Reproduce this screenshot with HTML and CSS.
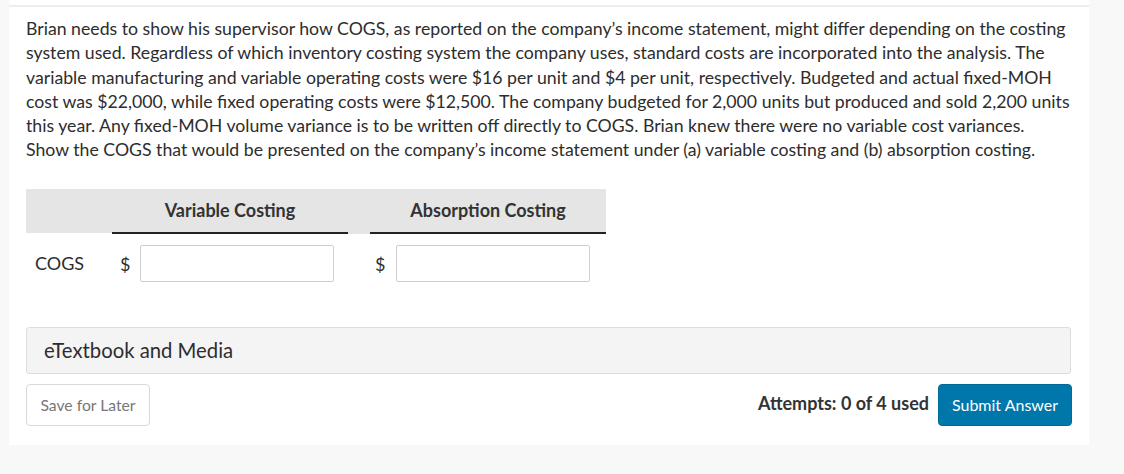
FILE: index.html
```html
<!DOCTYPE html>
<html>
<head>
<meta charset="utf-8">
<link rel="stylesheet" href="styles.css">
</head>
<body>
<div class="panel">
  <div class="question">
    <p class="prompt">Brian needs to show his supervisor how COGS, as reported on the company’s income statement, might differ depending on the costing system used. Regardless of which inventory costing system the company uses, standard costs are incorporated into the analysis. The variable manufacturing and variable operating costs were $16 per unit and $4 per unit, respectively. Budgeted and actual fixed-MOH cost was $22,000, while fixed operating costs were $12,500. The company budgeted for 2,000 units but produced and sold 2,200 units this year. Any fixed-MOH volume variance is to be written off directly to COGS. Brian knew there were no variable cost variances. Show the COGS that would be presented on the company’s income statement under (a) variable costing and (b) absorption costing.</p>

    <table class="grid">
      <thead>
        <tr>
          <th class="lab"></th>
          <th class="col">Variable Costing</th>
          <th class="sp"></th>
          <th class="col">Absorption Costing</th>
        </tr>
      </thead>
      <tbody>
        <tr>
          <td class="rowlab">COGS</td>
          <td class="cell"><span class="dollar">$</span><input class="box" type="text"></td>
          <td class="sp"></td>
          <td class="cell"><span class="dollar second">$</span><input class="box" type="text"></td>
        </tr>
      </tbody>
    </table>

    <div class="media">eTextbook and Media</div>

    <div class="actions">
      <button class="save">Save for Later</button>
      <div class="right">
        <span class="attempts">Attempts: 0 of 4 used</span>
        <button class="submit">Submit Answer</button>
      </div>
    </div>
  </div>
</div>
</body>
</html>
```

FILE: styles.css
```css
html, body {
  margin: 0;
  padding: 0;
  background: #f8f8f8;
}
body {
  font-family: Lato, "Open Sans", sans-serif;
  color: #2d2d2d;
  width: 1124px;
  height: 474px;
}
.panel {
  margin-left: 9px;
  width: 1080px;
  height: 445px;
  background: #ffffff;
  padding-top: 5px;
  box-sizing: border-box;
}
.question {
  border-top: 2px solid #eeeeee;
  padding: 10px 17px 0 17px;
}
.prompt {
  margin: 0;
  font-size: 17.7px;
  line-height: 24.3px;
  width: 1045px;
}
.grid {
  margin-top: 26px;
  border-collapse: collapse;
}
.grid th {
  background: #e5e5e5;
  height: 43px;
  padding: 0;
  font-size: 18px;
  font-weight: 700;
  color: #333;
}
.grid th.col {
  border-bottom: 2px solid #222;
}
.lab { width: 86px; }
.col { width: 236px; }
.sp { width: 22px; }
.grid th.sp { border-bottom: 2px solid #e5e5e5; background: #e5e5e5; }
.grid th.lab { border-bottom: 0; }
.grid td {
  padding: 0;
  height: 60px;
  vertical-align: middle;
}
.grid td.rowlab {
  padding-left: 9px;
  font-size: 18px;
}
.cell {
  white-space: nowrap;
}
.dollar {
  display: inline-block;
  width: 28px;
  font-size: 18px;
  padding-left: 8px;
  box-sizing: border-box;
  vertical-align: middle;
}
.dollar.second {
  width: 26px;
  padding-left: 5px;
}
.box {
  width: 194px;
  height: 37px;
  box-sizing: border-box;
  border: 1px solid #cfcfcf;
  border-radius: 2px;
  vertical-align: middle;
  margin: 0;
}
.media {
  margin-top: 33px;
  height: 47px;
  box-sizing: border-box;
  background: #f4f4f4;
  border: 1px solid #dddddd;
  border-radius: 3px;
  padding-left: 17px;
  font-size: 20.3px;
  line-height: 45px;
  width: 1045px;
  color: #2d2d2d;
}
.actions {
  margin-top: 10px;
  display: flex;
  justify-content: space-between;
  align-items: center;
  width: 1046px;
}
.save {
  width: 124px;
  height: 42px;
  background: #fff;
  border: 1px solid #d9d9d9;
  border-radius: 4px;
  color: #777;
  font-family: Lato, sans-serif;
  font-size: 15.7px;
  padding: 0;
}
.right {
  display: flex;
  align-items: center;
  gap: 9px;
}
.attempts {
  font-size: 18px;
  font-weight: 700;
  color: #333;
  margin-top: -4px;
}
.submit {
  width: 134px;
  height: 42px;
  background: #0077aa;
  border: 1px solid #006a99;
  border-radius: 4px;
  color: #fff;
  font-family: Lato, sans-serif;
  font-size: 16px;
  padding: 0;
}
```
